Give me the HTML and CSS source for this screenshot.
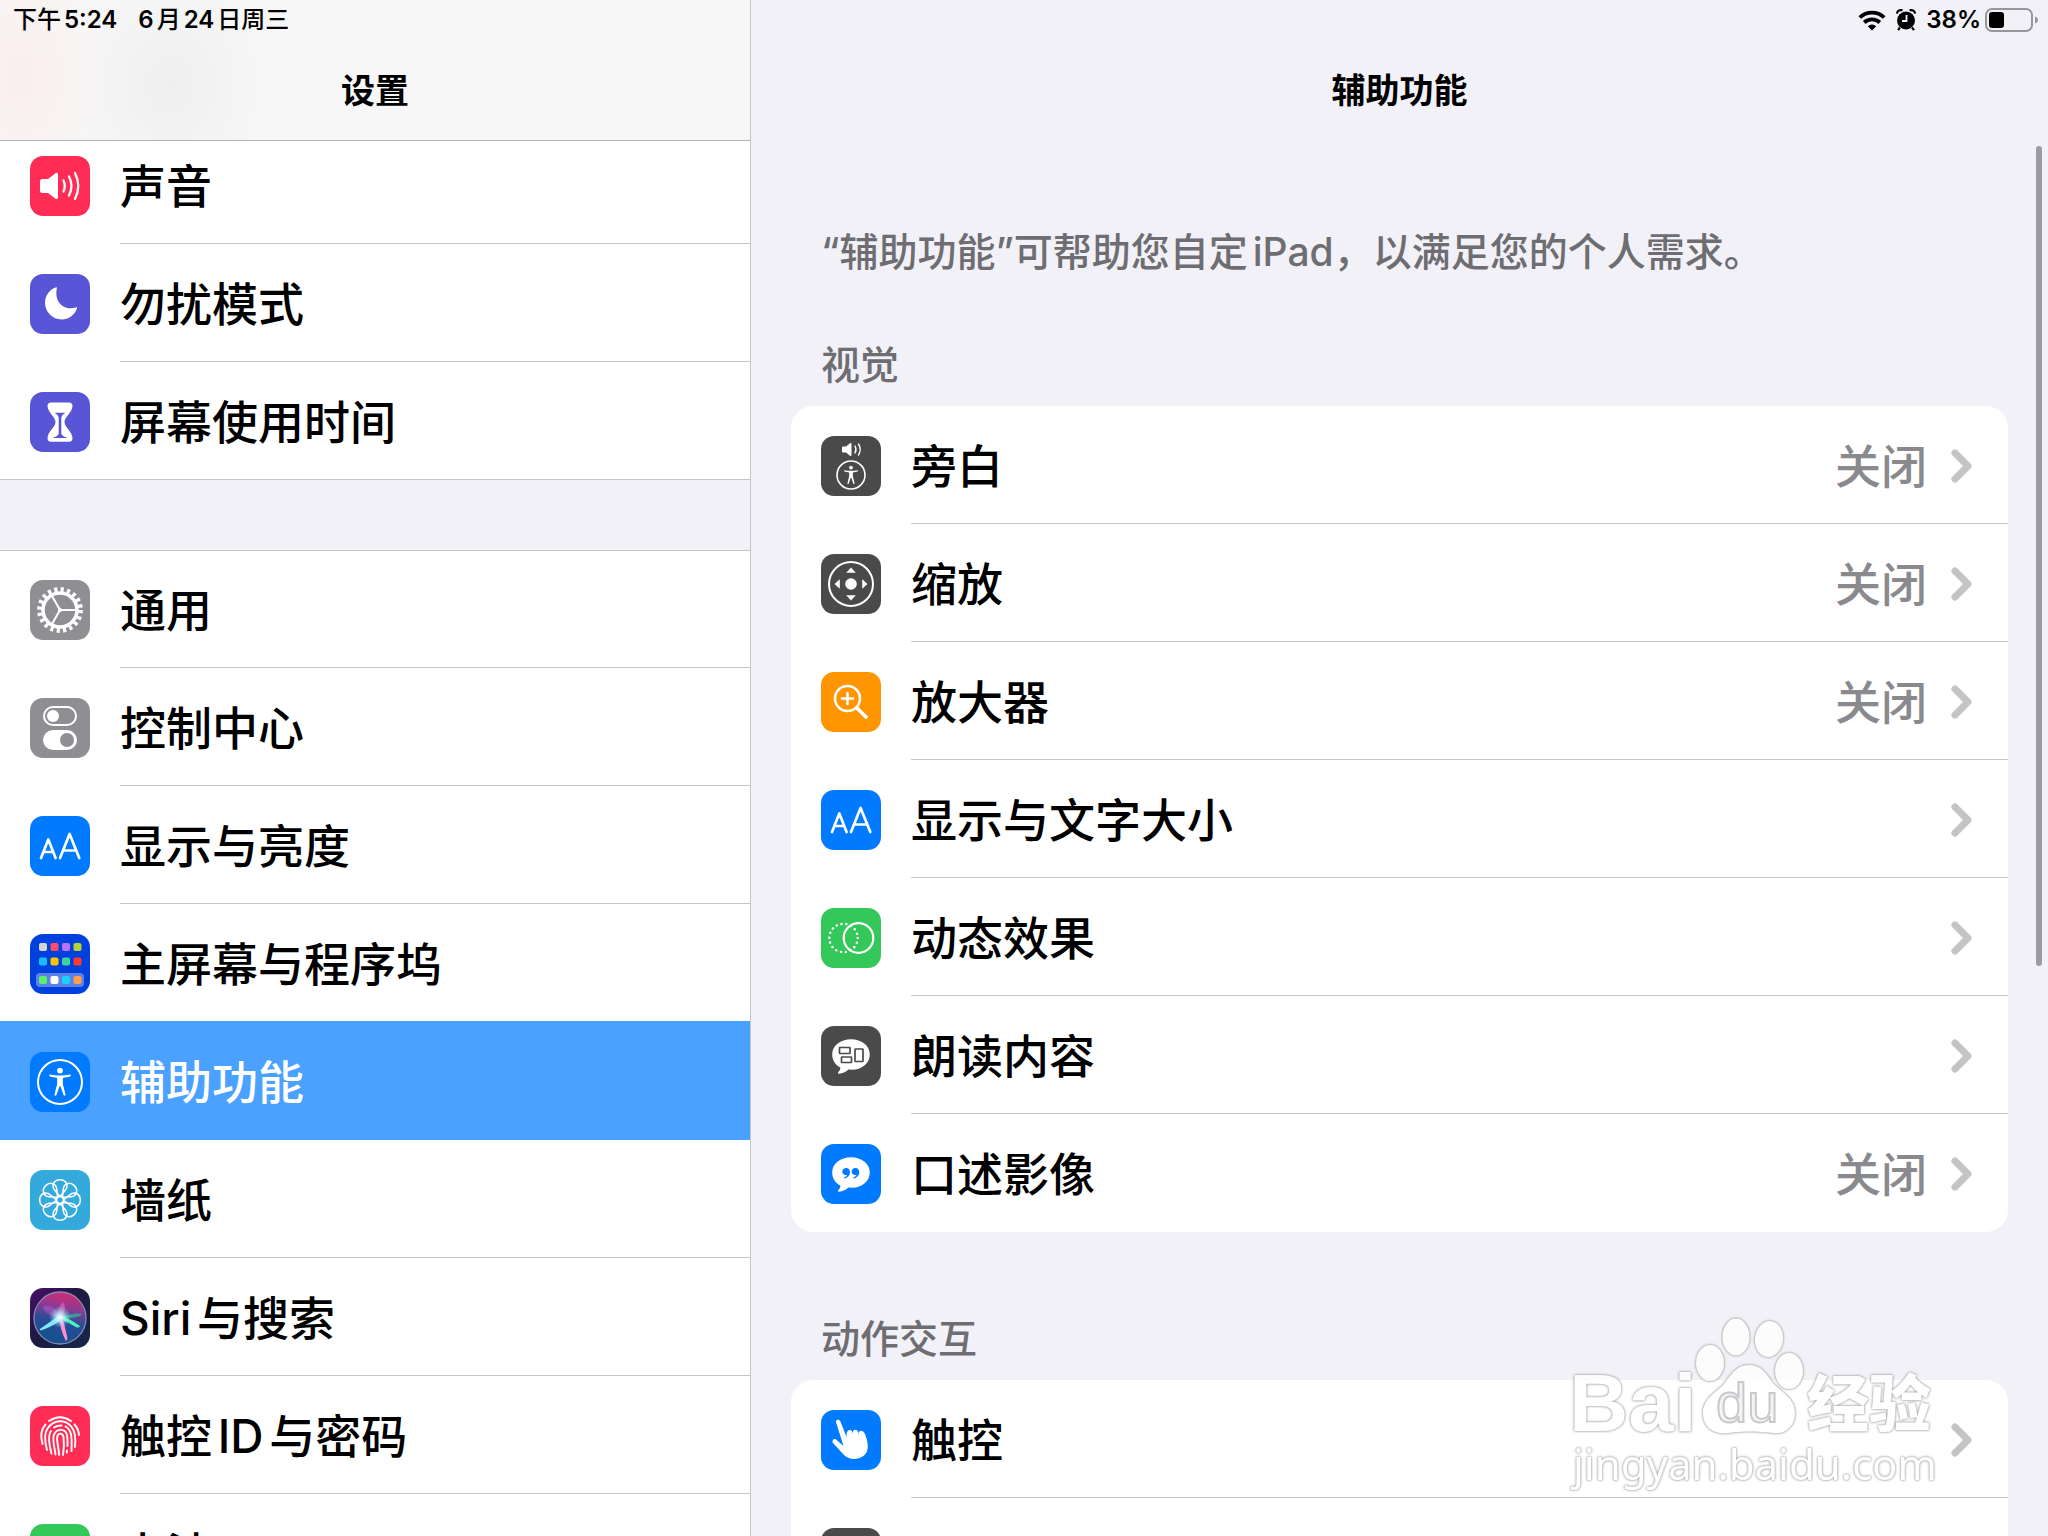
FILE: index.html
```html
<!DOCTYPE html>
<html lang="zh-CN">
<head>
  <meta charset="utf-8">
  <title>设置</title>
  <link rel="stylesheet" href="styles.css">
</head>
<body>
  <!-- shared shapes -->
  <svg class="defs" width="0" height="0" aria-hidden="true">
    <symbol id="chevron" viewBox="0 0 21 34">
      <path d="M4 4L17 17L4 30" fill="none" stroke="#c4c4c7" stroke-width="7" stroke-linecap="round" stroke-linejoin="round"/>
    </symbol>
    <symbol id="person" viewBox="0 0 24 30">
      <circle cx="12" cy="3" r="3" fill="#fff"/>
      <path d="M1 7.2Q12 9.400 23 7.200Q23.800 8.800 22.500 9.300L15 10.800V17L17.800 28.400Q16.800 30 15.800 28.800L12.500 19.500H11.500L8.200 28.800Q7.200 30 6.200 28.400L9 17V10.800L1.500 9.300Q.2 8.800 1 7.200Z" fill="#fff"/>
    </symbol>
    <symbol id="letters" viewBox="0 0 60 60">
      <path d="M11 42L18.300 23.500L25.600 42M13.500 36H23M30 42L39.600 18L49.300 42M33.500 34.500H45.800" fill="none" stroke="#fff" stroke-width="2.700" stroke-linecap="round" stroke-linejoin="round"/>
    </symbol>
    <symbol id="bubble" viewBox="0 0 60 60">
      <path d="M30 13.200C40.500 13.200 48.800 19.500 48.800 28.500C48.800 37.500 40.500 43.800 31 43.800L27.500 43.600C24.500 46.500 20.500 48 17.500 47.700C16.700 47.500 16.800 46.500 17.500 46C18.800 44.500 19.500 43 19.300 41.600C14.500 39 11.200 34.500 11.200 28.500C11.200 19.500 19.500 13.200 30 13.200Z" fill="#fff"/>
    </symbol>
  </svg>

  <div class="status-bar">
    <div class="status-left">
      <span>下午<b>5:24</b></span>
      <span><b>6</b>月<b>24</b>日周三</span>
    </div>
    <div class="status-right">
      <svg width="28" height="21" viewBox="0 0 28 21">
        <path d="M1.800 7.500A17.500 17.500 0 0 1 26.200 7.500M6.200 12.500A11.500 11.500 0 0 1 21.800 12.500" fill="none" stroke="#000" stroke-width="3.800"/>
        <path d="M14 20.500L9.800 16.200A6 6 0 0 1 18.200 16.200Z"/>
      </svg>
      <svg width="20" height="22" viewBox="0 0 20 22">
        <circle cx="10" cy="11.500" r="9"/>
        <path d="M1 4.500Q1.500 .5 6.500 1.200M19 4.500Q18.500 .5 13.500 1.200M4 18.500L2 21.200M16 18.500L18 21.200" fill="none" stroke="#000" stroke-width="2.200"/>
        <path d="M10.500 6V12H6" fill="none" stroke="#f2f1f7" stroke-width="1.800"/>
      </svg>
      <b>38%</b>
      <svg class="battery" width="54" height="24" viewBox="0 0 54 24">
        <rect x="1" y="1" width="46" height="22" rx="6" fill="none" stroke="#97979b" stroke-width="2"/>
        <rect x="4" y="4" width="15" height="16" rx="3"/>
        <path d="M50 8.500Q53 9.500 53 12Q53 14.500 50 15.500Z" fill="#97979b"/>
      </svg>
    </div>
  </div>

  <div class="container">
    <nav class="sidebar">
      <h1 class="title sidebar-title">设置</h1>

      <ul class="list first-list">
        <li><a class="row" href="#sound">
          <svg class="icon" viewBox="0 0 60 60">
            <rect width="60" height="60" rx="13" fill="#ff2d55"/>
            <path d="M12.500 23H18L25.500 17.200Q28 16 28 19V41Q28 44 25.500 42.800L18 37H12.500Q10 37 10 34.500V25.500Q10 23 12.500 23Z" fill="#fff"/>
            <path d="M33.500 24.500Q36 30 33.500 35.500M39 20.500Q44 30 39 39.500M45 17Q51.500 30 45 43" fill="none" stroke="#fff" stroke-width="2.300" stroke-linecap="round"/>
          </svg>
          <span class="label">声音</span>
        </a></li>
        <li><a class="row" href="#dnd">
          <svg class="icon" viewBox="0 0 60 60">
            <rect width="60" height="60" rx="13" fill="#5856d6"/>
            <path d="M26.500 13.300C20 15 15 21.500 15 28.800C15 38 22.500 45.500 31.500 45.500C39 45.500 45 40.500 47 34.200C47.200 33.200 46.500 33.200 45.800 33.500C35 37 24 29 26.800 14.500C27 13.500 27 13.200 26.500 13.300Z" fill="#fff"/>
          </svg>
          <span class="label">勿扰模式</span>
        </a></li>
        <li><a class="row" href="#screentime">
          <svg class="icon" viewBox="0 0 60 60">
            <rect width="60" height="60" rx="13" fill="#5856d6"/>
            <path d="M21 10.500H39Q42.500 10.500 42.500 14C42 21 34.500 25 34.500 30C34.500 35 42 39 42.500 46Q42.500 49.800 39 49.800H21Q17.500 49.800 17.500 46C18 39 25.500 35 25.500 30C25.500 25 18 21 17.500 14Q17.500 10.500 21 10.500Z" fill="#fff"/>
            <path d="M24.500 20.800H35.500Q32 22.500 31.300 25.500V42Q32.500 44.300 37.500 46H22.500Q27.500 44.300 28.700 42V25.500Q28 22.500 24.500 20.800Z" fill="#5856d6"/>
          </svg>
          <span class="label">屏幕使用时间</span>
        </a></li>
      </ul>

      <ul class="list">
        <li><a class="row" href="#general">
          <svg class="icon" viewBox="0 0 60 60">
            <rect width="60" height="60" rx="13" fill="#8e8e93"/>
            <circle cx="30" cy="30" r="20.600" fill="none" stroke="#fff" stroke-width="4.600" stroke-dasharray="3.200 3.272"/>
            <circle cx="30" cy="30" r="17" fill="none" stroke="#fff" stroke-width="3.600"/>
            <path d="M46 30H30L22 16M30 30L22 44" fill="none" stroke="#fff" stroke-width="2"/>
            <circle cx="30" cy="30" r="2" fill="#fff"/>
          </svg>
          <span class="label">通用</span>
        </a></li>
        <li><a class="row" href="#control">
          <svg class="icon" viewBox="0 0 60 60">
            <rect width="60" height="60" rx="13" fill="#8e8e93"/>
            <rect x="14" y="9" width="32" height="18" rx="9" fill="none" stroke="#fff" stroke-width="2"/>
            <circle cx="23" cy="18" r="6" fill="#fff"/>
            <rect x="13" y="32" width="34" height="20" rx="10" fill="#fff"/>
            <circle cx="37" cy="42" r="7" fill="#8e8e93"/>
          </svg>
          <span class="label">控制中心</span>
        </a></li>
        <li><a class="row" href="#display">
          <svg class="icon" viewBox="0 0 60 60">
            <rect width="60" height="60" rx="13" fill="#007aff"/>
            <use href="#letters"/>
          </svg>
          <span class="label">显示与亮度</span>
        </a></li>
        <li><a class="row" href="#home">
          <svg class="icon" viewBox="0 0 60 60">
            <rect width="60" height="60" rx="13" fill="#0040dd"/>
            <rect x="6" y="39" width="48" height="14" rx="4" fill="#5a82e8"/>
            <g>
              <rect x="9" y="9" width="8" height="8" rx="2" fill="#d5d5cf"/>
              <rect x="20.500" y="9" width="8" height="8" rx="2" fill="#ff4f67"/>
              <rect x="32" y="9" width="8" height="8" rx="2" fill="#b673ff"/>
              <rect x="43.500" y="9" width="8" height="8" rx="2" fill="#b4d335"/>
              <rect x="9" y="23.500" width="8" height="8" rx="2" fill="#18bdff"/>
              <rect x="20.500" y="23.500" width="8" height="8" rx="2" fill="#ffc400"/>
              <rect x="32" y="23.500" width="8" height="8" rx="2" fill="#3bd6a0"/>
              <rect x="43.500" y="23.500" width="8" height="8" rx="2" fill="#ff3b30"/>
              <rect x="9" y="42" width="8" height="8" rx="2" fill="#5cf06a"/>
              <rect x="20.500" y="42" width="8" height="8" rx="2" fill="#fff"/>
              <rect x="32" y="42" width="8" height="8" rx="2" fill="#1cd0ff"/>
              <rect x="43.500" y="42" width="8" height="8" rx="2" fill="#ff9d4a"/>
            </g>
          </svg>
          <span class="label">主屏幕与程序坞</span>
        </a></li>
        <li><a class="row selected" href="#accessibility" aria-current="page">
          <svg class="icon" viewBox="0 0 60 60">
            <rect width="60" height="60" rx="13" fill="#007aff"/>
            <circle cx="30" cy="30" r="22" fill="none" stroke="#fff" stroke-width="2"/>
            <use href="#person" x="18.500" y="15" width="23" height="30"/>
          </svg>
          <span class="label">辅助功能</span>
        </a></li>
        <li><a class="row" href="#wallpaper">
          <svg class="icon" viewBox="0 0 60 60">
            <rect width="60" height="60" rx="13" fill="#34aadc"/>
            <g fill="none" stroke="#fff" stroke-width="1.500">
              <path id="petal" d="M30 26.500L25 20.500C20.500 15 24.500 9.700 30 9.700C35.500 9.700 39.500 15 35 20.500Z"/>
              <use href="#petal" transform="rotate(45 30 30)"/>
              <use href="#petal" transform="rotate(90 30 30)"/>
              <use href="#petal" transform="rotate(135 30 30)"/>
              <use href="#petal" transform="rotate(180 30 30)"/>
              <use href="#petal" transform="rotate(225 30 30)"/>
              <use href="#petal" transform="rotate(270 30 30)"/>
              <use href="#petal" transform="rotate(315 30 30)"/>
              <circle cx="30" cy="30" r="3.500"/>
            </g>
          </svg>
          <span class="label">墙纸</span>
        </a></li>
        <li><a class="row" href="#siri">
          <svg class="icon" viewBox="0 0 60 60">
            <defs>
              <linearGradient id="siri-back" x1="0" y1="0" x2="1" y2="1">
                <stop offset="0" stop-color="#4a0d6b"/>
                <stop offset=".45" stop-color="#1d1a40"/>
                <stop offset="1" stop-color="#14284a"/>
              </linearGradient>
              <linearGradient id="siri-orb" x1=".6" y1="0" x2=".4" y2="1">
                <stop offset="0" stop-color="#d42a70"/>
                <stop offset=".3" stop-color="#8c3b93"/>
                <stop offset=".55" stop-color="#2a4c94"/>
                <stop offset="1" stop-color="#12508e"/>
              </linearGradient>
              <radialGradient id="siri-glow">
                <stop offset="0" stop-color="#fff"/>
                <stop offset=".4" stop-color="#c9f6ff" stop-opacity=".7"/>
                <stop offset="1" stop-color="#7fd8f0" stop-opacity="0"/>
              </radialGradient>
            </defs>
            <rect width="60" height="60" rx="13" fill="url(#siri-back)"/>
            <circle cx="30" cy="30" r="26" fill="url(#siri-orb)" stroke="#8a86b8" stroke-width="1.300"/>
            <path d="M30 29Q46 24 52 26Q49 31 30 30Z" fill="#2fb0a0" opacity=".8"/>
            <path d="M30 28Q22 14 13 19Q14 26 28 30Z" fill="#a45ac4" opacity=".6"/>
            <path d="M31 29Q38 20 33 14Q26 20 30 29Z" fill="#f070b8" opacity=".55"/>
            <path d="M28 28Q20 34 10 41Q9 43 12 42Q24 38 32 31Z" fill="#7fe9ff"/>
            <path d="M31 27Q42 32 50 38Q49 41 44 38Q36 33 29 31Z" fill="#4df0b8"/>
            <path d="M29 30Q31 44 36 53Q38 52 37 48Q35 38 32 29Z" fill="#ff8fd0"/>
            <circle cx="30" cy="29" r="11" fill="url(#siri-glow)"/>
          </svg>
          <span class="label">Siri与搜索</span>
        </a></li>
        <li><a class="row" href="#touchid">
          <svg class="icon" viewBox="0 0 60 60">
            <rect width="60" height="60" rx="13" fill="#ff2d55"/>
            <g fill="none" stroke="#fff" stroke-width="1.900" stroke-linecap="round">
              <path d="M19 15Q30 7.500 41 15"/>
              <path d="M44.500 18.500Q48.500 23 49 29"/>
              <path d="M15.500 18.500C10.500 24 10.500 31 12.500 38"/>
              <path d="M17 44C14.500 35 14.500 27 17.500 22.500C24 13 36 13 42 21.500C46 27 45.500 36 45 41"/>
              <path d="M21.500 47.500C19 38 18 29 21 25"/>
              <path d="M24 21.500Q26.500 19.500 31.500 19.500"/>
              <path d="M35.500 20.500C42 24 42 31 41.500 45"/>
              <path d="M25.500 48.500C24.500 41 22 33 24 28.500C27 22 35.500 22.500 37 29C37.800 33 37.700 36 37.500 40"/>
              <path d="M37 44.500L36.800 46.500"/>
              <path d="M29 49C29 42 26.500 36 27.200 31C28 26.500 32.500 26.500 33.500 31C34.300 37 34 43 33 49"/>
            </g>
          </svg>
          <span class="label">触控ID与密码</span>
        </a></li>
        <li><a class="row" href="#battery">
          <svg class="icon" viewBox="0 0 60 60">
            <rect width="60" height="60" rx="13" fill="#34c759"/>
            <rect x="10" y="21" width="36" height="18" rx="4" fill="#fff"/>
            <rect x="48" y="26" width="3" height="8" rx="1" fill="#fff"/>
          </svg>
          <span class="label">电池</span>
        </a></li>
      </ul>
    </nav>

    <main class="content">
      <h1 class="title">辅助功能</h1>
      <p class="intro">“辅助功能”可帮助您自定iPad，以满足您的个人需求。</p>

      <h2 class="section-title">视觉</h2>
      <ul class="card">
        <li><a class="row" href="#voiceover">
          <svg class="icon" viewBox="0 0 60 60">
            <rect width="60" height="60" rx="13" fill="#4a4a4a"/>
            <path d="M22 10.500H25L29 7.300Q30.500 6.500 30.500 8V19Q30.500 20.500 29 19.700L25 16.500H22Q21 16.500 21 15.500V11.500Q21 10.500 22 10.500Z" fill="#fff"/>
            <path d="M34 10Q36 13.500 34 17M37.500 8Q41 13.500 37.500 19" fill="none" stroke="#fff" stroke-width="1.400" stroke-linecap="round"/>
            <circle cx="30" cy="39" r="14" fill="none" stroke="#fff" stroke-width="1.600"/>
            <use href="#person" x="22.500" y="29.500" width="15" height="19"/>
          </svg>
          <span class="label">旁白</span>
          <span class="value">关闭</span>
          <svg class="chevron"><use href="#chevron"/></svg>
        </a></li>
        <li><a class="row" href="#zoom">
          <svg class="icon" viewBox="0 0 60 60">
            <rect width="60" height="60" rx="13" fill="#4a4a4a"/>
            <circle cx="30" cy="30" r="22" fill="none" stroke="#fff" stroke-width="2"/>
            <circle cx="30" cy="30" r="5.800" fill="#fff"/>
            <path d="M30 13.500L34.800 18.800H25.200ZM30 46.500L34.800 41.200H25.200ZM13.500 30L18.800 25.200V34.800ZM46.500 30L41.200 25.200V34.800Z" fill="#fff"/>
          </svg>
          <span class="label">缩放</span>
          <span class="value">关闭</span>
          <svg class="chevron"><use href="#chevron"/></svg>
        </a></li>
        <li><a class="row" href="#magnifier">
          <svg class="icon" viewBox="0 0 60 60">
            <rect width="60" height="60" rx="13" fill="#ff9500"/>
            <circle cx="26.500" cy="26.500" r="12.500" fill="none" stroke="#fff" stroke-width="2.500"/>
            <path d="M26.500 21V32M21 26.500H32" stroke="#fff" stroke-width="2.500" stroke-linecap="round"/>
            <path d="M36 36L45 45" stroke="#fff" stroke-width="3.800" stroke-linecap="round"/>
          </svg>
          <span class="label">放大器</span>
          <span class="value">关闭</span>
          <svg class="chevron"><use href="#chevron"/></svg>
        </a></li>
        <li><a class="row" href="#textsize">
          <svg class="icon" viewBox="0 0 60 60">
            <rect width="60" height="60" rx="13" fill="#007aff"/>
            <use href="#letters"/>
          </svg>
          <span class="label">显示与文字大小</span>
          <svg class="chevron"><use href="#chevron"/></svg>
        </a></li>
        <li><a class="row" href="#motion">
          <svg class="icon" viewBox="0 0 60 60">
            <rect width="60" height="60" rx="13" fill="#34c759"/>
            <circle cx="22.500" cy="30" r="14.200" fill="none" stroke="#fff" stroke-width="2.600" stroke-linecap="round" stroke-dasharray="0 4.956"/>
            <circle cx="37.500" cy="30" r="14.800" fill="none" stroke="#fff" stroke-width="2.200"/>
          </svg>
          <span class="label">动态效果</span>
          <svg class="chevron"><use href="#chevron"/></svg>
        </a></li>
        <li><a class="row" href="#spoken">
          <svg class="icon" viewBox="0 0 60 60">
            <rect width="60" height="60" rx="13" fill="#4a4a4a"/>
            <use href="#bubble"/>
            <g fill="none" stroke="#4a4a4a" stroke-width="1.700">
              <rect x="18.500" y="21.500" width="10.500" height="6" rx=".5"/>
              <rect x="20.500" y="31" width="10" height="5.500" rx=".5"/>
              <rect x="34" y="23" width="8" height="12.500" rx=".5"/>
            </g>
          </svg>
          <span class="label">朗读内容</span>
          <svg class="chevron"><use href="#chevron"/></svg>
        </a></li>
        <li><a class="row" href="#description">
          <svg class="icon" viewBox="0 0 60 60">
            <rect width="60" height="60" rx="13" fill="#007aff"/>
            <use href="#bubble"/>
            <g fill="#007aff">
              <path id="tick" d="M25.200 24C27.700 24 29 26 29 28.300C29 31.500 26.500 34 23.500 34.500C22.800 34.500 22.800 33.700 23.300 33.500C25 32.800 26 31.800 26.200 30.800C23.500 31.700 21.300 30 21.300 27.700C21.300 25.500 23 24 25.200 24Z"/>
              <use href="#tick" x="9.300"/>
            </g>
          </svg>
          <span class="label">口述影像</span>
          <span class="value">关闭</span>
          <svg class="chevron"><use href="#chevron"/></svg>
        </a></li>
      </ul>

      <h2 class="section-title">动作交互</h2>
      <ul class="card">
        <li><a class="row" href="#touch">
          <svg class="icon" viewBox="0 0 60 60">
            <rect width="60" height="60" rx="13" fill="#007aff"/>
            <path d="M14.800 11.500C15.500 9.300 18.500 9.300 19.400 11.500L25.800 27.500C25.500 24 25.500 20.500 28.500 20C30.800 20 31.500 22 31.800 24.500C31.500 21.500 32 19.700 34.500 19.700C36.800 19.800 37.500 22 37.800 24.500C37.800 22 38.500 20.500 40.500 20.800C43.500 21.500 44.500 25 45.500 28.500C48.500 38 46.500 45.500 38.500 48C32 50.200 26.500 48.500 22.500 44.500L12 33C10.500 31 12.500 28 15 29.500L22.500 36Z" fill="#fff"/>
          </svg>
          <span class="label">触控</span>
          <svg class="chevron"><use href="#chevron"/></svg>
        </a></li>
        <li><a class="row" href="#switch">
          <svg class="icon" viewBox="0 0 60 60">
            <rect width="60" height="60" rx="13" fill="#4a4a4a"/>
          </svg>
          <span class="label">切换控制</span>
          <svg class="chevron"><use href="#chevron"/></svg>
        </a></li>
      </ul>
      <div class="scrollbar"></div>
    </main>
  </div>

  <svg class="watermark" width="380" height="190" viewBox="0 0 380 190">
    <g class="halo">
      <text class="wm-brand" x="0" y="121">Bai</text>
      <ellipse cx="141" cy="53" rx="14" ry="18"/>
      <ellipse cx="167" cy="27" rx="13.500" ry="18.500"/>
      <ellipse cx="200" cy="29" rx="14" ry="18" transform="rotate(8 200 29)"/>
      <ellipse cx="220" cy="61" rx="14" ry="18"/>
      <path d="M180 55C193 55 198 65 204 73C211 81 226 88 226 103C226 117 215 125 204 123C190 121 172 121 160 123C146 125 134 118 134 103C134 88 148 82 155 74C161 66 167 55 180 55Z"/>
      <text class="wm-name" x="238" y="117">经验</text>
      <text class="wm-url" x="4" y="170">jingyan.baidu.com</text>
    </g>
    <text class="wm-du" x="147" y="112">du</text>
  </svg>
</body>
</html>
```
FILE: styles.css
```css
* {
  box-sizing: border-box;
}

body {
  margin: 0;
  height: 100vh;
  overflow: hidden;
  position: relative;
  background: #f2f1f7;
  color: #000;
  font-family: Inter, "Noto Sans CJK SC", sans-serif;
  font-weight: 500;
  text-autospace: normal;
}

ul {
  list-style: none;
  margin: 0;
  padding: 0;
}

.defs {
  position: absolute;
}

.status-bar {
  position: absolute;
  top: 0;
  left: 0;
  right: 0;
  z-index: 3;
  height: 40px;
  padding: 0 13px;
  display: flex;
  justify-content: space-between;
  align-items: center;
  font-size: 24px;
  line-height: 40px;
}

.status-bar b {
  font-weight: 600;
}

.status-left {
  display: flex;
  gap: 21px;
}

.status-right {
  display: flex;
  align-items: center;
  gap: 10px;
}

.battery {
  margin-left: -6px;
  margin-right: -4px;
}

.container {
  display: flex;
  height: 100%;
}

.title {
  margin: 0;
  height: 140px;
  padding-top: 42px;
  font-size: 34px;
  line-height: 98px;
  font-weight: 700;
  text-align: center;
}

.sidebar {
  flex: 0 0 751px;
  overflow: hidden;
  border-right: 1px solid #c6c6c8;
}

.sidebar-title {
  position: relative;
  z-index: 2;
  height: 141px;
  border-bottom: 1px solid #b2b2b4;
  background:
    radial-gradient(90px 130px at 20px 75px, #faeeed 0, #faeeed00 100%),
    radial-gradient(100px 120px at 170px 85px, #efefef 0, #efefef00 100%),
    #f7f7f7;
}

.list {
  background: #fff;
  box-shadow: inset 0 1px #c6c6c8, inset 0 -1px #c6c6c8;
  margin-bottom: 70px;
}

/* scrolled a little way under the title bar */
.first-list {
  margin-top: -15px;
}

.row {
  position: relative;
  display: flex;
  align-items: center;
  height: 118px;
  padding: 2px 36px 0 30px;
  color: #000;
  font-size: 46px;
  line-height: 60px;
  text-decoration: none;
}

/* hairline between rows, starts under the label */
li + li .row::before {
  content: "";
  position: absolute;
  top: -1px;
  left: 120px;
  right: 0;
  height: 1px;
  background: #c6c6c8;
}

.row.selected {
  background: #4ba1ff;
  color: #fff;
  box-shadow: 0 -1px #4ba1ff;
}

li + li .row.selected::before,
li:has(.selected) + li .row::before {
  background: #4ba1ff;
}

.icon {
  flex: none;
  width: 60px;
  height: 60px;
  margin-right: 30px;
}

.label {
  flex: 1;
}

.value {
  color: #8a8a8e;
  margin-right: 24px;
}

.chevron {
  width: 21px;
  height: 34px;
}

.content {
  position: relative;
  flex: 1;
  overflow: hidden;
}

.intro,
.section-title {
  margin: 86px 70px 61px;
  color: #6d6d72;
  font-size: 39px;
  line-height: 52px;
  font-weight: 500;
}

.section-title {
  margin: 0 70px 15px;
}

.card {
  margin: 0 40px 81px;
  background: #fff;
  border-radius: 22px;
}

.scrollbar {
  position: absolute;
  top: 146px;
  right: 6px;
  width: 6px;
  height: 820px;
  border-radius: 3px;
  background: #9c9ba0;
}

.watermark {
  position: absolute;
  right: 99px;
  bottom: 36px;
  z-index: 4;
  fill: #fff;
  opacity: 0.8;
  pointer-events: none;
}

.halo {
  filter: drop-shadow(0 0 1px #888) drop-shadow(0 0 1px #bbb);
}

.wm-brand {
  font: bold 82px "Liberation Sans", sans-serif;
}

.wm-name {
  font: 900 62px "Noto Sans CJK SC", sans-serif;
}

.wm-url {
  font: 42px "Noto Sans", sans-serif;
}

.wm-du {
  font: 56px "Liberation Sans", sans-serif;
  fill: #f2f2f4;
  stroke: #bcbcc0;
  stroke-width: 2px;
}
```
